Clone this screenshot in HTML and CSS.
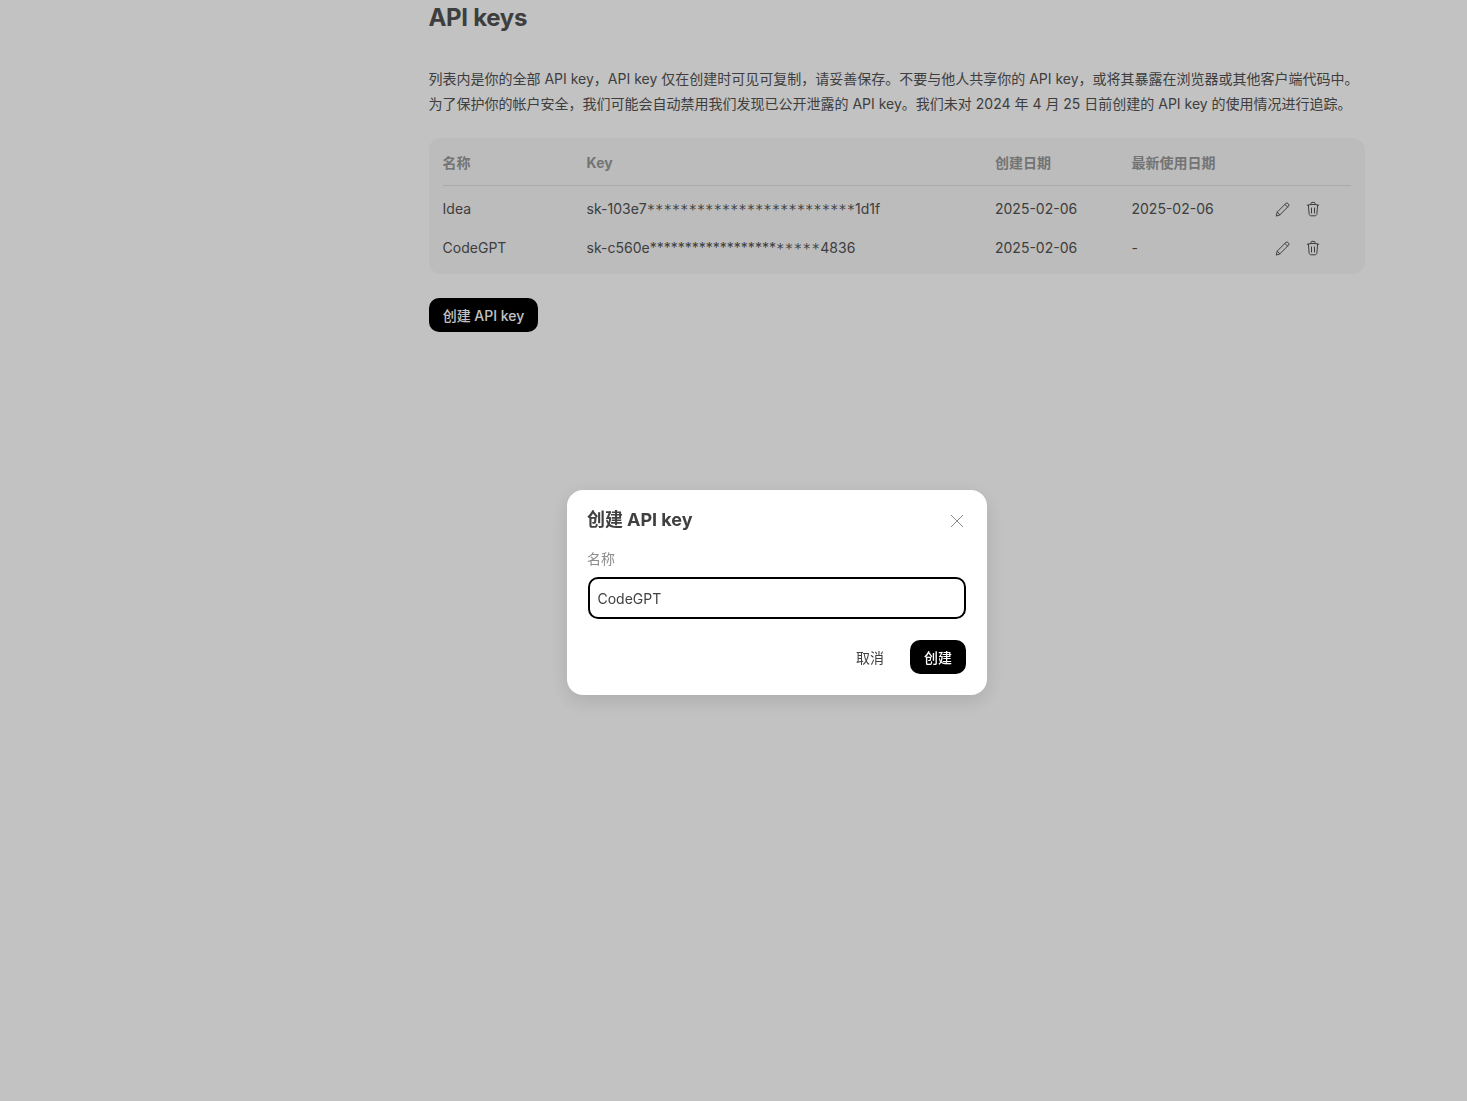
FILE: index.html
```html
<!DOCTYPE html>
<html lang="zh-CN">
<head>
<meta charset="utf-8">
<title>API keys</title>
<link rel="stylesheet" href="styles.css">
</head>
<body>
<main class="page">
  <h1 class="title">API keys</h1>
  <div class="intro">
    <p>列表内是你的全部 API key，API key 仅在创建时可见可复制，请妥善保存。不要与他人共享你的 API key，或将其暴露在浏览器或其他客户端代码中。</p>
    <p>为了保护你的帐户安全，我们可能会自动禁用我们发现已公开泄露的 API key。我们未对 2024 年 4 月 25 日前创建的 API key 的使用情况进行追踪。</p>
  </div>
  <div class="card">
    <table class="keys">
      <thead>
        <tr><th class="c-name">名称</th><th class="c-key">Key</th><th class="c-date">创建日期</th><th class="c-used">最新使用日期</th><th></th></tr>
      </thead>
      <tbody>
        <tr>
          <td>Idea</td><td>sk-103e7<span class="s2">*************************</span>1d1f</td><td class="d">2025-02-06</td><td class="d">2025-02-06</td>
          <td><div class="acts">
            <svg class="ic" viewBox="0 0 16 16"><path d="M1.3 14.7l.9-3.6 8.6-8.6a1.5 1.5 0 0 1 2.1 0l.6.6a1.5 1.5 0 0 1 0 2.1l-8.6 8.6z M2.2 11.1l2.7 2.7 M9.9 3.4l2.7 2.7"/></svg>
            <svg class="ic" viewBox="0 0 16 16"><path d="M2.3 4.2c3.6-1 7.8-1 11.4 0 M6 3.6V2.2c0-.5.3-.8.8-.8h2.4c.5 0 .8.3.8.8v1.4 M3.4 4.2l.7 8.6c.1 1.2.9 2 2 2h3.8c1.1 0 1.9-.8 2-2l.7-8.6 M6.5 7v5 M9.5 7v5"/></svg>
          </div></td>
        </tr>
        <tr>
          <td>CodeGPT</td><td>sk-c560e<span class="s1">******************</span><span class="s3">*****</span>4836</td><td class="d">2025-02-06</td><td class="d">-</td>
          <td><div class="acts">
            <svg class="ic" viewBox="0 0 16 16"><path d="M1.3 14.7l.9-3.6 8.6-8.6a1.5 1.5 0 0 1 2.1 0l.6.6a1.5 1.5 0 0 1 0 2.1l-8.6 8.6z M2.2 11.1l2.7 2.7 M9.9 3.4l2.7 2.7"/></svg>
            <svg class="ic" viewBox="0 0 16 16"><path d="M2.3 4.2c3.6-1 7.8-1 11.4 0 M6 3.6V2.2c0-.5.3-.8.8-.8h2.4c.5 0 .8.3.8.8v1.4 M3.4 4.2l.7 8.6c.1 1.2.9 2 2 2h3.8c1.1 0 1.9-.8 2-2l.7-8.6 M6.5 7v5 M9.5 7v5"/></svg>
          </div></td>
        </tr>
      </tbody>
    </table>
  </div>
  <button class="btn btn-create">创建 API key</button>
</main>
<div class="overlay">
  <section class="modal">
    <header class="modal-head">
      <h2 class="modal-title">创建 API key</h2>
      <svg class="close" viewBox="0 0 14 14"><path d="M1 1l12 12 M13 1L1 13"/></svg>
    </header>
    <label class="field-label">名称</label>
    <div class="input">CodeGPT</div>
    <footer class="modal-foot">
      <span class="cancel">取消</span>
      <button class="btn btn-ok">创建</button>
    </footer>
  </section>
</div>
</body>
</html>
```
FILE: styles.css
```css
* { box-sizing: border-box; }
html, body { margin: 0; height: 100%; }
body {
  background: #fff;
  font-family: Inter, "Noto Sans CJK SC", sans-serif;
  color: #525252;
  font-size: 14px;
  overflow: hidden;
}
.page { width: 936px; margin-left: 429px; }
.title { margin: 0 0 0 -0.5px; font-size: 24px; line-height: 36px; font-weight: 700; letter-spacing: -0.3px; }
.intro { margin: 30px 0 0 -0.5px; line-height: 25px; font-size: 14px; white-space: nowrap; }
.intro p { margin: 0; }
.card { margin-top: 22px; background: #f7f7f7; border-radius: 12px; padding: 0 14px; height: 136px; }
.keys { width: 100%; border-collapse: collapse; table-layout: fixed; }
.keys th { height: 47px; padding: 2px 0 0; text-align: left; text-indent: -0.4px; font-size: 14px; font-weight: 700; color: #999; border-bottom: 1px solid #e0e0e0; }
.keys td { height: 39px; padding: 0; white-space: nowrap; text-indent: -0.4px; }
.keys td.d, .keys th.c-date, .keys th.c-used { text-indent: 0; }
.keys tbody tr:first-child td { padding-top: 3px; height: 43px; }
.keys tbody tr:first-child .acts { margin-top: 1px; }
.c-name { width: 144px; }
.c-key { width: 408px; }
.c-date { width: 136.5px; }
.c-used { width: 144.5px; }
.s2 { font-family: "DejaVu Sans Mono", monospace; font-size: 14px; letter-spacing: -0.1px; }
.s3 { font-family: "DejaVu Sans Mono", monospace; font-size: 14px; letter-spacing: 0.45px; }
.acts { display: flex; gap: 14px; margin-left: -1px; }
.ic { width: 16px; height: 16px; fill: none; stroke: #525252; stroke-width: 1; stroke-linejoin: round; stroke-linecap: round; }
.btn { border: 0; background: #000; color: #fff; font-family: inherit; font-size: 14px; font-weight: 500; height: 34px; border-radius: 10px; padding: 0; }
.btn-create { display: block; margin-top: 24px; width: 109px; }
.overlay { position: fixed; inset: 0; background: rgba(0,0,0,.24); backdrop-filter: blur(0.5px); }
.modal {
  position: absolute; left: 567px; top: 490px; width: 420px; height: 205px;
  background: #fff; border-radius: 16px; padding: 15px 21px 21px 20px;
  box-shadow: 0 6px 20px rgba(0,0,0,.12);
}
.modal-head { display: flex; justify-content: space-between; align-items: center; height: 28px; }
.modal-title { margin: -2px 0 0; font-size: 18px; font-weight: 700; letter-spacing: -0.05px; color: #404040; }
.close { width: 14px; height: 14px; fill: none; stroke: #8c8c8c; stroke-width: 1; margin-right: 2px; margin-top: 4px; }
.field-label { display: block; margin-top: 16px; line-height: 20px; color: #8c8c8c; }
.input { margin: 8px 0 0 1px; height: 42px; border: 2px solid #000; border-radius: 10px; padding: 1px 7.5px 0; line-height: 38px; color: #404040; }
.modal-foot { display: flex; justify-content: flex-end; align-items: center; margin-top: 21px; gap: 26px; }
.cancel { color: #404040; }
.btn-ok { width: 56px; }
```
